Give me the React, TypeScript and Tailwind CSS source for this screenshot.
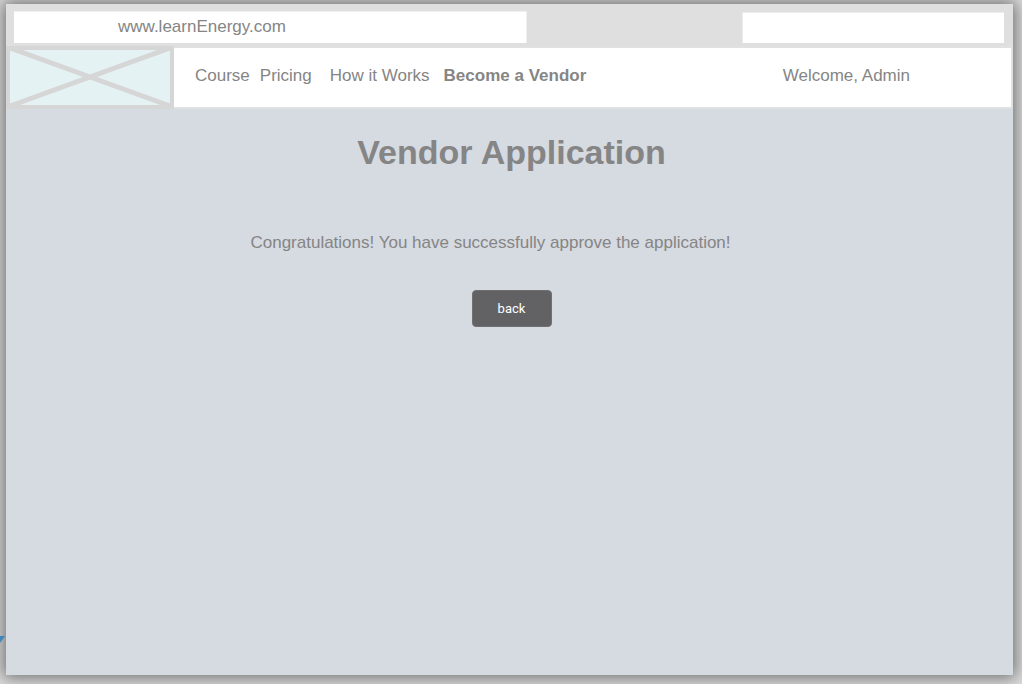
import React from "react";

const links = [
  { label: "Course", className: "mr-2.5" },
  { label: "Pricing", className: "mr-[18px]" },
  { label: "How it Works", className: "mr-3.5" },
  { label: "Become a Vendor", className: "font-bold" },
];

function BrowserBar() {
  return (
    <div className="flex h-[42px] items-end justify-between bg-[#dfdfdf] pr-[9px] pb-[3px] pl-2">
      <input
        type="text"
        aria-label="Address"
        defaultValue="www.learnEnergy.com"
        className="h-8 w-[513px] border-t border-r border-[#f0f0f0] bg-white pb-0.5 pl-[104px] text-[17px] outline-none"
      />
      <input
        type="search"
        aria-label="Search"
        className="h-[31px] w-[262px] border-t border-l border-[#ececec] bg-white px-2 text-[17px] outline-none"
      />
    </div>
  );
}

function Logo() {
  return (
    <svg
      role="img"
      aria-label="Logo"
      viewBox="0 0 168 63"
      className="h-[63px] w-[168px] shrink-0"
    >
      <rect width="168" height="63" fill="#d6d6d6" />
      <rect x="4" y="4" width="160" height="55" fill="#e4f2f4" />
      <path d="M4 2L164 60M164 2L4 60" stroke="#d6d6d6" strokeWidth="5" />
      <path d="M0 0H168V63H0ZM4 4V59H164V4Z" fill="#d6d6d6" fillRule="evenodd" />
    </svg>
  );
}

function Header() {
  return (
    <header className="flex h-[63px] bg-[#e0e1e3]">
      <Logo />
      <div className="mt-0.5 mr-0.5 mb-0.5 flex flex-1 items-center justify-between bg-white pr-[101px] pb-1 pl-[21px]">
        <nav aria-label="Main" className="flex">
          {links.map((link) => (
            <a key={link.label} href="#" className={link.className}>
              {link.label}
            </a>
          ))}
        </nav>
        <p>Welcome, Admin</p>
      </div>
    </header>
  );
}

export default function App() {
  return (
    <div className="relative flex min-h-screen flex-col overflow-hidden bg-[#dedede] pt-1 pr-[9px] pb-[9px] pl-1.5 font-['Liberation_Sans',Arial,sans-serif] text-[17px] leading-5 text-[#858585]">
      <svg
        aria-hidden="true"
        viewBox="0 0 5 8"
        className="absolute bottom-10 left-0 h-2 w-[5px]"
      >
        <path d="M0 0H5L0 7Z" fill="#3f87b8" />
      </svg>
      <div className="flex flex-1 flex-col bg-[#d6dae1] shadow-[0_0_16px_3px_rgba(0,0,0,0.5)]">
        <BrowserBar />
        <Header />
        <main className="flex flex-col items-center pt-[23px] pl-1">
          <h1 className="text-[34px] leading-10 font-bold">Vendor Application</h1>
          <p className="mt-[61px] mr-[42px]">
            Congratulations! You have successfully approve the application!
          </p>
          <button
            type="button"
            className="mt-[37px] h-[37px] w-20 rounded border border-[#707072] bg-[#626264] font-['Roboto',sans-serif] text-[13px] text-white"
          >
            back
          </button>
        </main>
      </div>
    </div>
  );
}
